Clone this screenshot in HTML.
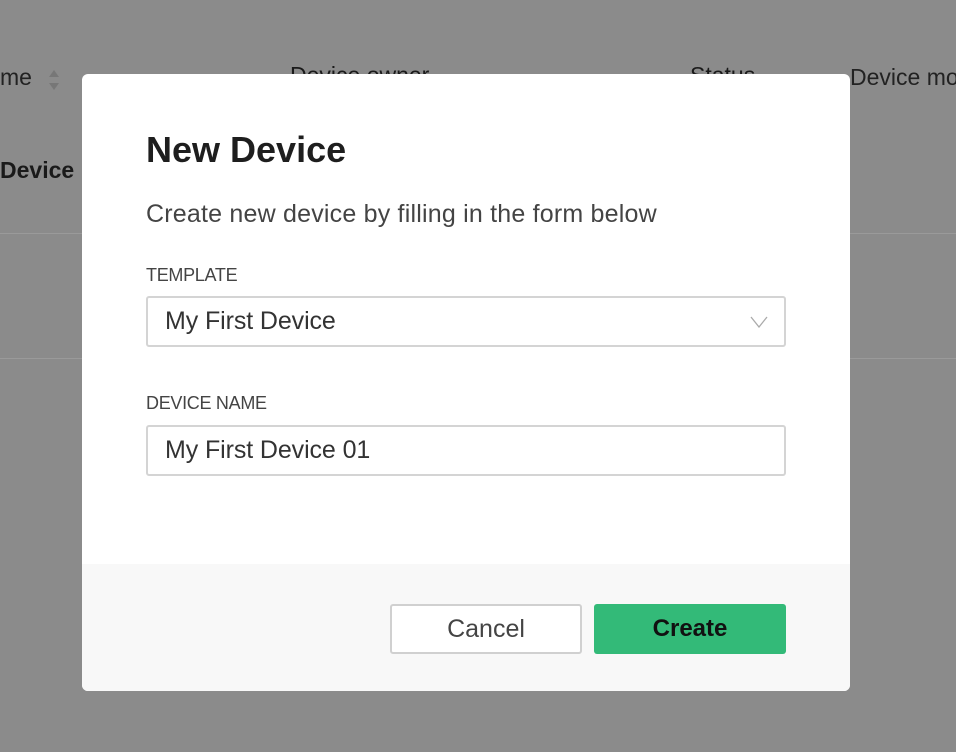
<!DOCTYPE html>
<html><head><style>
*{box-sizing:border-box;margin:0;padding:0}
body{width:956px;height:752px;background:#8b8b8b;font-family:"Liberation Sans",Arial,sans-serif;position:relative;overflow:hidden}
.bg{position:absolute;color:#1a1a1a;font-size:23px;white-space:nowrap}
.line{position:absolute;left:0;width:956px;height:1px;background:#9a9a9a}
.modal{position:absolute;left:82px;top:74px;width:768px;height:617px;background:#fff;border-radius:6px;overflow:hidden}
.footer{position:absolute;left:0;top:490px;width:768px;height:127px;background:#f8f8f8}
h1{position:absolute;left:64px;top:55px;font-size:36px;font-weight:bold;color:#1e1e1e}
.sub{position:absolute;left:64px;top:126px;font-size:25px;color:#444;white-space:nowrap;letter-spacing:0.2px}
.lbl{position:absolute;left:64px;font-size:18px;color:#444;letter-spacing:-0.3px}
.box{position:absolute;left:64px;width:640px;height:51px;border:2px solid #d4d4d4;border-radius:3px;font-size:25px;color:#333;padding:9px 17px;letter-spacing:-0.1px}
.btn{position:absolute;top:530px;width:192px;height:50px;border-radius:3px;font-size:25px;text-align:center;line-height:46px}
</style></head><body>
<div class="bg" style="left:0;top:64px;color:#222">me</div>
<svg style="position:absolute;left:47px;top:68px" width="14" height="24"><path d="M7 2 L12 9 L2 9Z M7 22 L12 15 L2 15Z" fill="#777"/></svg>
<div class="bg" style="left:290px;top:62px">Device owner</div>
<div class="bg" style="left:690px;top:62px">Status</div>
<div class="bg" style="left:850px;top:64px;color:#222">Device mo</div>
<div class="bg" style="left:0;top:157px;font-weight:bold">Device</div>
<div class="line" style="top:233px"></div>
<div class="line" style="top:358px"></div>
<div class="modal">
<h1>New Device</h1>
<div class="sub">Create new device by filling in the form below</div>
<div class="lbl" style="top:191px">TEMPLATE</div>
<div class="box" style="top:222px">My First Device
<svg style="position:absolute;right:16px;top:18px" width="18" height="12"><path d="M1 1 L9 11 L17 1" fill="none" stroke="#aaa" stroke-width="1.3"/></svg></div>
<div class="lbl" style="top:319px">DEVICE NAME</div>
<div class="box" style="top:351px">My First Device 01</div>
<div class="footer"></div>
<div class="btn" style="left:308px;border:2px solid #d0d0d0;background:#fff;color:#444">Cancel</div>
<div class="btn" style="left:512px;background:#33ba78;color:#111;font-weight:bold;font-size:24px;line-height:50px">Create</div>
</div>
</body></html>
